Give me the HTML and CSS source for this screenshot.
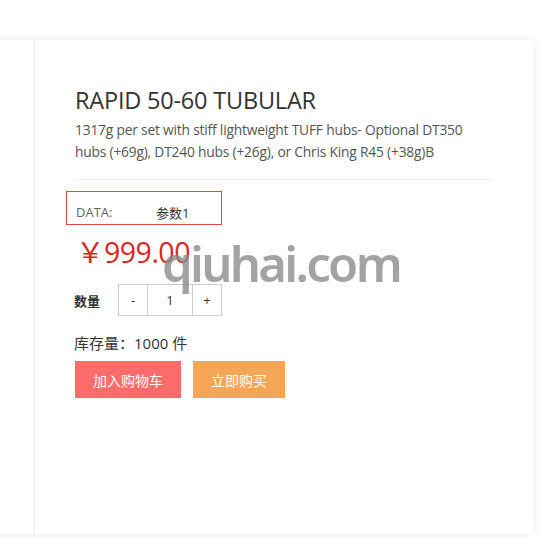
FILE: index.html
```html
<!DOCTYPE html>
<html>
<head>
<meta charset="utf-8">
<link rel="stylesheet" href="styles.css">
</head>
<body>
<div class="page">
  <div class="card">
    <div class="side"></div>
    <div class="main">
      <h1 class="title">RAPID 50-60 TUBULAR</h1>
      <p class="desc">1317g per set with stiff lightweight TUFF hubs- Optional DT350 hubs (+69g), DT240 hubs (+26g), or Chris King R45 (+38g)B</p>
      <div class="divider"></div>
      <div class="attr">
        <span class="attr-label">DATA:</span>
        <span class="attr-value">参数1</span>
      </div>
      <div class="price">￥999.00</div>
      <div class="qty-row">
        <span class="qty-label">数量</span>
        <div class="qty">
          <span class="qty-btn">-</span>
          <span class="qty-val">1</span>
          <span class="qty-btn">+</span>
        </div>
      </div>
      <div class="stock">库存量：1000 件</div>
      <div class="actions">
        <button class="btn btn-cart">加入购物车</button>
        <button class="btn btn-buy">立即购买</button>
      </div>
    </div>
  </div>
  <div class="watermark">qiuhai.com</div>
</div>
</body>
</html>
```
FILE: styles.css
```css
html, body {
  margin: 0;
  padding: 0;
  background: #ffffff;
}
body {
  font-family: "Open Sans", "Noto Sans CJK SC", sans-serif;
  color: #333;
  overflow: hidden;
}
.page {
  position: relative;
  width: 559px;
  height: 538px;
  padding-top: 40px;
  box-sizing: border-box;
}
.card {
  margin-left: -20px;
  width: 553px;
  height: 494px;
  background: #fff;
  box-shadow: 0 0 10px rgba(0, 0, 0, 0.09);
  display: flex;
}
.side {
  width: 54px;
  border-right: 1px solid #eeeeee;
  flex: none;
}
.main {
  padding-left: 40px;
  padding-right: 40px;
  flex: 1;
}
.title {
  margin: 45px 0 0;
  font-size: 23.5px;
  font-weight: 400;
  line-height: 30px;
  color: #333;
  letter-spacing: -0.2px;
}
.desc {
  margin: 4px 0 0;
  max-width: 400px;
  font-size: 13.8px;
  line-height: 22px;
  color: #555;
  letter-spacing: -0.2px;
}
.divider {
  margin-top: 16px;
  height: 1px;
  background: #eeeeee;
}
.attr {
  margin-top: 11px;
  margin-left: -9px;
  width: 145px;
  border: 1px solid #e64545;
  display: flex;
  align-items: center;
  padding: 8px 0 0 9px;
  height: 24px;
  font-size: 13px;
}
.attr-label {
  color: #666;
  width: 80px;
}
.attr-value {
  color: #333;
}
.price {
  margin-top: 7px;
  margin-left: 1px;
  font-size: 28.5px;
  line-height: 40px;
  color: #d9271e;
  letter-spacing: -0.5px;
}
.qty-row {
  margin-top: 12px;
  display: flex;
  align-items: center;
}
.qty-label {
  font-size: 13px;
  font-weight: 700;
  color: #333;
  width: 44px;
  margin-left: -1px;
}
.qty {
  display: flex;
  border: 1px solid #cccccc;
  height: 30px;
}
.qty span {
  display: flex;
  align-items: center;
  justify-content: center;
  font-size: 13px;
  color: #333;
}
.qty-btn {
  width: 28px;
}
.qty-val {
  width: 44px;
  border-left: 1px solid #cccccc;
  border-right: 1px solid #cccccc;
}
.stock {
  margin-top: 16px;
  margin-left: -1px;
  font-size: 15px;
  line-height: 22px;
  color: #333;
}
.actions {
  margin-top: 7px;
  display: flex;
  gap: 12px;
}
.btn {
  border: none;
  height: 37px;
  color: #fff;
  font-family: "Open Sans", "Noto Sans CJK SC", sans-serif;
  font-size: 14px;
  padding: 0;
  box-shadow: 0 1px 2px rgba(0, 0, 0, 0.06);
}
.btn-cart {
  width: 106px;
  background: #fd6b6b;
}
.btn-buy {
  width: 92px;
  background: #f4a656;
}
.watermark {
  position: absolute;
  left: 162px;
  top: 240px;
  font-family: "Noto Sans", "DejaVu Sans", sans-serif;
  font-weight: 600;
  font-size: 49px;
  line-height: 46px;
  color: rgba(140, 140, 140, 0.8);
  letter-spacing: -2.7px;
}
```
